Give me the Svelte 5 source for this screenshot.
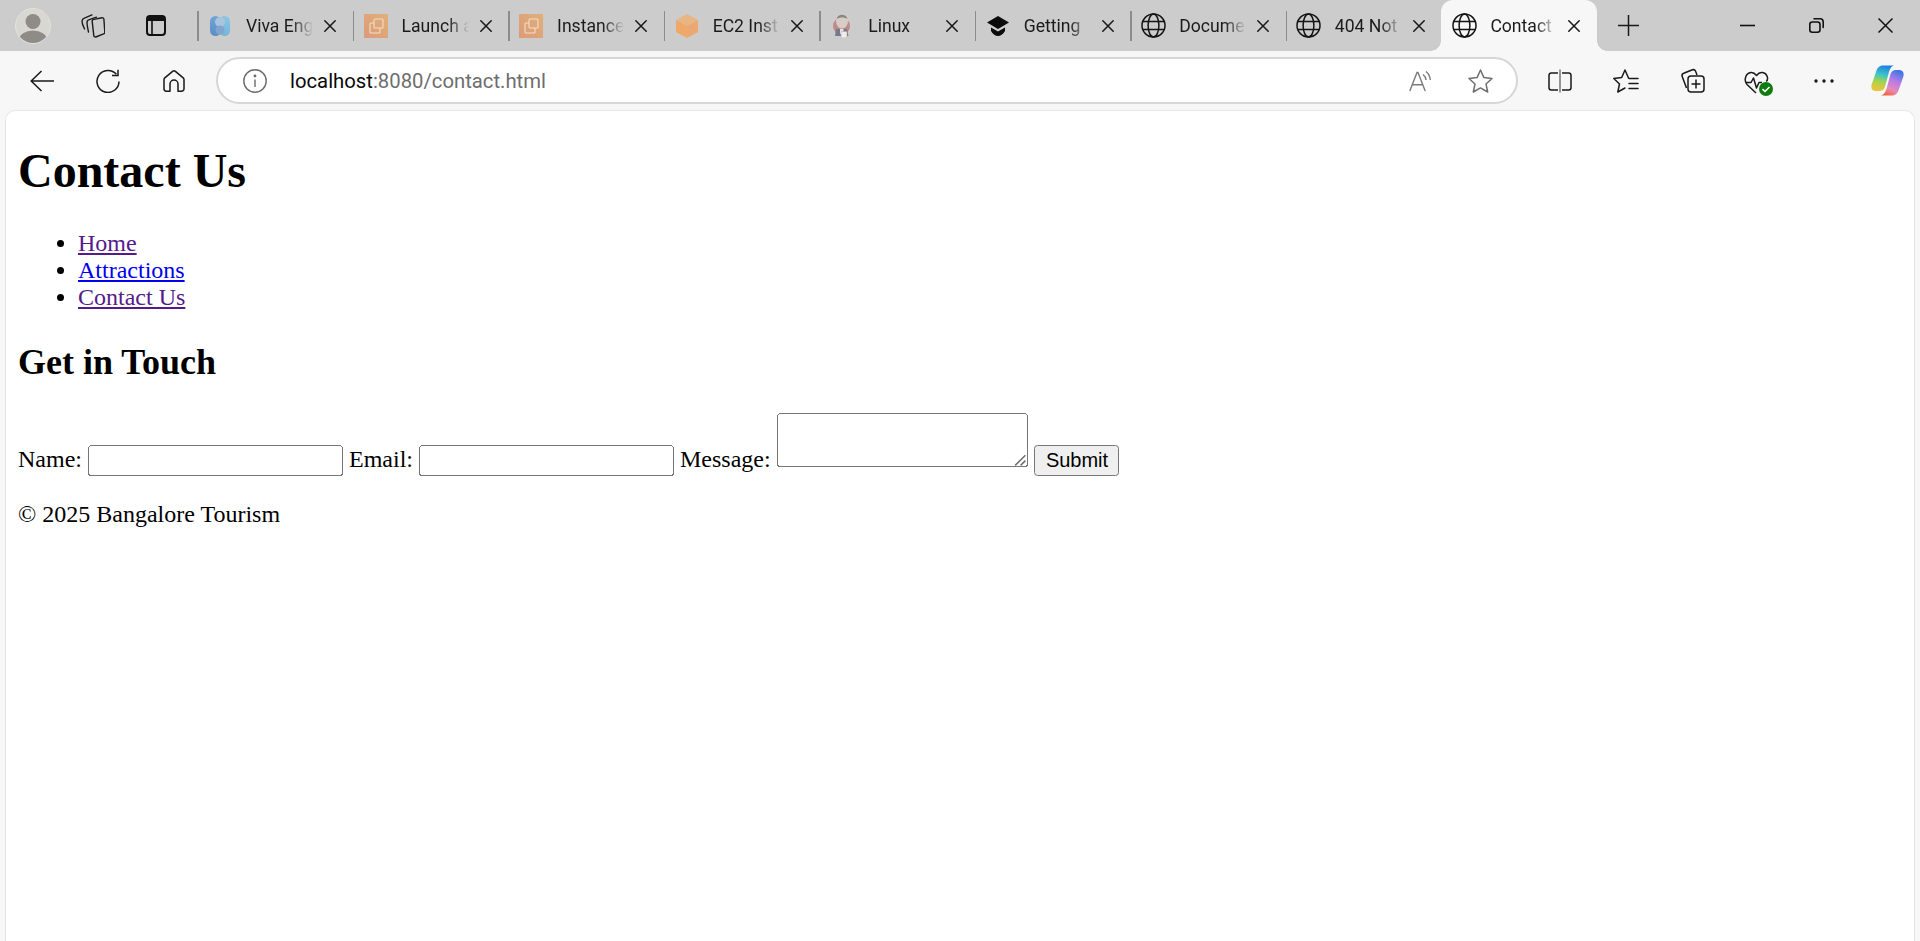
<script lang="ts">
  // Edge window chrome around the plain contact page (page itself rendered at 150%).
  const tabs = [
    { title: 'Viva Eng', icon: 'viva' },
    { title: 'Launch a', icon: 'aws' },
    { title: 'Instance', icon: 'aws' },
    { title: 'EC2 Inst', icon: 'cube' },
    { title: 'Linux', icon: 'jenkins' },
    { title: 'Getting', icon: 'cap' },
    { title: 'Docume', icon: 'globe' },
    { title: '404 Not', icon: 'globe' },
    { title: 'Contact', icon: 'globe', active: true },
  ];
</script>

{#snippet favicon(kind)}
  {#if kind === 'viva'}
    <svg class="fav" width="22" height="22" viewBox="0 0 22 22">
      <defs>
        <linearGradient id="v1" x1="0" y1="0" x2="0" y2="1"><stop offset="0" stop-color="#6fa6d6" /><stop offset="1" stop-color="#5c8cc4" /></linearGradient>
        <linearGradient id="v2" x1="0" y1="0" x2="0" y2="1"><stop offset="0" stop-color="#8cc6e2" /><stop offset="1" stop-color="#77b5da" /></linearGradient>
      </defs>
      <rect x="1" y="1" width="11" height="20" rx="5.5" fill="url(#v1)" />
      <rect x="10" y="1" width="11" height="20" rx="5.5" fill="url(#v2)" />
      <circle cx="11" cy="7" r="5" fill="#a9c4dc" />
      <circle cx="11" cy="15" r="4.5" fill="#7ea6cf" />
    </svg>
  {:else if kind === 'aws'}
    <svg class="fav" width="24" height="24" viewBox="0 0 24 24">
      <defs>
        <linearGradient id="a1" x1="0" y1="1" x2="1" y2="0"><stop offset="0" stop-color="#dc9a78" /><stop offset="1" stop-color="#e0b07a" /></linearGradient>
      </defs>
      <rect width="24" height="24" fill="url(#a1)" />
      <g fill="none" stroke="#f0dfca" stroke-width="1.1">
        <rect x="10" y="5" width="9" height="9" rx="1" />
        <path d="M10 9H7a1 1 0 0 0-1 1v8a1 1 0 0 0 1 1h8a1 1 0 0 0 1-1v-4" />
      </g>
    </svg>
  {:else if kind === 'cube'}
    <svg class="fav" width="22" height="24" viewBox="0 0 22 24">
      <path d="M11 0 22 6 11 12 0 6Z" fill="#e9b582" />
      <path d="M0 6 11 12V24L0 18Z" fill="#efa868" />
      <path d="M22 6 11 12V24L22 18Z" fill="#eba873" />
    </svg>
  {:else if kind === 'jenkins'}
    <svg class="fav" width="20" height="25" viewBox="0 0 20 25">
      <ellipse cx="9.5" cy="13" rx="8.500" ry="8.500" fill="#c08a88" />
      <ellipse cx="10" cy="8" rx="6" ry="7.500" fill="#d8cdc6" />
      <path d="M4.500 6c1-5 9.500-6 11 0-3-2-7.500-2-11 0Z" fill="#8a8583" />
      <path d="M4 16h11l1.500 7H3Z" fill="#737c8c" />
      <path d="M8 16h3.500v5H8Z" fill="#e6e3e0" />
      <rect x="9" y="18.500" width="6" height="6.500" rx="1" fill="#efedeb" stroke="#adaaa7" stroke-width=".6" />
    </svg>
  {:else if kind === 'cap'}
    <svg class="fav" width="22" height="20" viewBox="0 0 22 20">
      <path d="M11 0 22 6.5 11 13 0 6.5Z" fill="#0b0b0b" />
      <path d="M4 11.5 11 15.5 18 11.5V15C16 18.5 13.5 20 11 20S6 18.5 4 15Z" fill="#0b0b0b" />
    </svg>
  {:else}
    <svg class="fav" width="25" height="25" viewBox="0 0 25 25" fill="none" stroke="#141414" stroke-width="1.5">
      <circle cx="12.5" cy="12.5" r="11.5" />
      <ellipse cx="12.5" cy="12.5" rx="5.4" ry="11.5" />
      <path d="M1.6 8.6H23.4M1.6 16.4H23.4" />
    </svg>
  {/if}
{/snippet}

<div class="window">
  <header class="strip">
    <svg class="avatar" width="36" height="36" viewBox="0 0 36 36">
      <defs><clipPath id="ava"><circle cx="18" cy="18" r="17" /></clipPath></defs>
      <circle cx="18" cy="18" r="17.5" fill="#d8d7d2" stroke="#e2e1dc" />
      <g clip-path="url(#ava)" fill="#8f8b87">
        <circle cx="18" cy="13.5" r="7.5" />
        <ellipse cx="18" cy="32" rx="14" ry="9.5" />
      </g>
    </svg>
    <svg class="ico collections" width="24" height="24" viewBox="0 0 24 24" fill="none" stroke="#1c1c1c" stroke-width="1.4" stroke-linejoin="round" stroke-linecap="round">
      <path d="M13 5.4 21 3.8a1.6 1.6 0 0 1 1.9 1.3L23.8 18a1.6 1.6 0 0 1-1.2 1.9L14.8 23a1.6 1.6 0 0 1-2-1.4L11.2 7.4a1.7 1.7 0 0 1 1.8-2Z" />
      <path d="M7.5 18C6.6 14 6 11 6 8.6a3 3 0 0 1 2.3-3L15.5 3.2" />
      <path d="M3.6 15C2 12 1 9.5 1 7.2a3.4 3.4 0 0 1 2.4-3.1L11 .9" />
    </svg>
    <svg class="ico vert" width="20" height="21" viewBox="0 0 20 21">
      <rect x="1" y="1" width="18" height="19" rx="3" fill="none" stroke="#111" stroke-width="2" />
      <path d="M1 6V4a3 3 0 0 1 3-3h12a3 3 0 0 1 3 3v2Z" fill="#111" />
      <path d="M6 6V20" stroke="#111" stroke-width="1.6" />
    </svg>

    <div class="tabs">
      {#each tabs as tab}
        <div class="tab" class:active={tab.active}>
          <span class="fav-box">{@render favicon(tab.icon)}</span>
          <span class="title">{tab.title}</span>
          <svg class="close" width="12" height="12" viewBox="0 0 12 12" stroke="#161616" stroke-width="1.5" stroke-linecap="round">
            <path d="M.8.8 11.2 11.2M11.2.8.8 11.2" />
          </svg>
        </div>
      {/each}
    </div>

    <svg class="ico plus" width="21" height="21" viewBox="0 0 21 21" stroke="#1a1a1a" stroke-width="1.5"><path d="M10.5 0V21M0 10.5H21" /></svg>

    <div class="winctl">
      <span><svg width="15" height="15" viewBox="0 0 15 15" stroke="#111" stroke-width="1.6"><path d="M0 7.5H15" /></svg></span>
      <span><svg width="15" height="15" viewBox="0 0 15 15" fill="none" stroke="#111" stroke-width="1.6"><rect x=".8" y="4" width="10.2" height="10.2" rx="2.5" /><path d="M4.5 1.2A2.6 2.6 0 0 1 6.6.8H11a3.2 3.2 0 0 1 3.2 3.2v4.4a2.6 2.6 0 0 1-.4 1.6" /></svg></span>
      <span><svg width="15" height="15" viewBox="0 0 15 15" stroke="#111" stroke-width="1.5"><path d="M.5.5 14.5 14.5M14.5.5.5 14.5" /></svg></span>
    </div>
  </header>

  <nav class="toolbar">
    <span class="tb"><svg width="24" height="22" viewBox="0 0 24 22" fill="none" stroke="#1a1a1a" stroke-width="1.5"><path d="M24 11H1.5M11.5 1 1.2 11l10.3 10" /></svg></span>
    <span class="tb"><svg width="24" height="24" viewBox="0 0 24 24" fill="none" stroke="#1a1a1a" stroke-width="1.5"><path d="M20.4 5.3A11 11 0 1 0 23 12.5" /><path d="M22 .8V6.4H16" /></svg></span>
    <span class="tb"><svg width="22" height="22" viewBox="0 0 22 22" fill="none" stroke="#1a1a1a" stroke-width="1.5" stroke-linejoin="round"><path d="M9.6 1.4a2.2 2.2 0 0 1 2.8 0l7.8 6.5a2.2 2.2 0 0 1 .8 1.7v9.2a2.4 2.4 0 0 1-2.4 2.4H15V14a4 4 0 0 0-8 0v7.2H3.400A2.400 2.400 0 0 1 1 18.800V9.600a2.200 2.200 0 0 1 .8-1.700Z" /></svg></span>

    <div class="address">
      <svg class="info" width="24" height="24" viewBox="0 0 24 24" fill="none" stroke="#6b6b6b" stroke-width="1.4"><circle cx="12" cy="12" r="11.200" /><path d="M12 10.500V18" /><circle cx="12" cy="7" r=".7" fill="#6b6b6b" /></svg>
      <span class="url"><span class="host">localhost</span>:8080/contact.html</span>
      <svg class="read" width="24" height="22" viewBox="0 0 24 22" fill="none" stroke="#7a7a7a" stroke-width="1.4"><path d="M.8 21 8 2.500h1L16.200 21M3.500 14.800H13.500" /><path d="M14 4.500c1.800 1.300 2.800 3 3 5.500M17 1.500c2.500 2 4 5 4.300 8.500" /></svg>
      <svg class="star" width="25" height="24" viewBox="0 0 25 24" fill="none" stroke="#6f6f6f" stroke-width="1.5" stroke-linejoin="round"><path d="M12.500 1 15.900 8.600 24 9.500 18 15 19.700 23 12.500 18.900 5.300 23 7 15 1 9.500 9.100 8.600Z" /></svg>
    </div>

    <div class="actions">
      <span class="tb"><svg width="24" height="24" viewBox="0 0 24 24" fill="none" stroke="#1a1a1a" stroke-width="1.5"><path d="M10 4H3.200A2.200 2.200 0 0 0 1 6.200V18.800A2.200 2.200 0 0 0 3.200 21H10M14 4H20.800A2.200 2.200 0 0 1 23 6.200V18.800A2.200 2.200 0 0 1 20.800 21H14" /><path d="M12 .5V23.500" stroke="#555" stroke-width="1.200" /></svg></span>
      <span class="tb"><svg width="26" height="24" viewBox="0 0 26 24" fill="none" stroke="#1a1a1a" stroke-width="1.5" stroke-linejoin="round" stroke-linecap="round"><path d="M15.500 9 12 1 8.700 8.500.8 9.500 6.500 15 4.800 23 12 19" /><path d="M16 9.500H25M16 14.500H25M16 19.500H25" /></svg></span>
      <span class="tb"><svg width="25" height="25" viewBox="0 0 25 25" fill="none" stroke="#1a1a1a" stroke-width="1.5" stroke-linejoin="round"><path d="M6.500 20 2.200 8.500a2.500 2.500 0 0 1 1.500-3.200L12.500 1.800a2.500 2.500 0 0 1 3 1.200L17 7" /><rect x="8" y="8" width="16" height="16" rx="3" /><path d="M16 11.500V20.500M11.500 16H20.500" /></svg></span>
      <span class="tb"><svg width="29" height="30" viewBox="0 0 29 30" fill="none"><g transform="translate(0 4)" stroke="#1a1a1a" stroke-width="1.500" stroke-linejoin="round"><path d="M12 23 3 14.500C-.5 10.500 1.500 3 7 2.500c2.500-.2 4 1 5.500 3C14 3.500 16 2 18.500 2.500c4.500.8 6.500 6 3.800 9" /><path d="M1.500 12.500H7L9.500 8 12.500 18 15 12.500H18" /></g><circle cx="22" cy="23" r="7" fill="#107c10" /><path d="M18.500 23.200 21 25.500 25.500 21" stroke="#fff" stroke-width="1.600" /></svg></span>
      <span class="tb"><svg width="20" height="4" viewBox="0 0 20 4" fill="#1a1a1a"><circle cx="2" cy="2" r="1.700" /><circle cx="10" cy="2" r="1.700" /><circle cx="18" cy="2" r="1.700" /></svg></span>
    </div>
    <svg class="copilot" width="33" height="31" viewBox="0 0 33 31">
      <defs>
        <linearGradient id="c1" x1=".55" y1="0" x2=".35" y2="1"><stop offset="0" stop-color="#1f7fe8" /><stop offset=".35" stop-color="#3cc3c8" /><stop offset=".65" stop-color="#a6d44c" /><stop offset="1" stop-color="#f4c13c" /></linearGradient>
        <linearGradient id="c2" x1=".7" y1="0" x2=".3" y2="1"><stop offset="0" stop-color="#3a78e6" /><stop offset=".4" stop-color="#b67be6" /><stop offset=".75" stop-color="#e889b8" /><stop offset="1" stop-color="#f2683c" /></linearGradient>
      </defs>
      <path d="M12 .5H23C19.500 1.500 18.500 5 17.500 9L14.500 20C13.500 24.500 11.500 26 8 26H5C1 26-.5 23 .8 19L5 7C6.200 2.800 8.500.5 12 .5Z" fill="url(#c1)" />
      <path d="M21 30.500H10C13.500 29.500 15 26 16 22L19 11C20 6.500 22 5 25.500 5H28C32 5 33.500 8 32.200 12L28 24C26.800 28.200 24.500 30.500 21 30.500Z" fill="url(#c2)" />
    </svg>
  </nav>

  <main class="card">
    <div class="page">
      <h1>Contact Us</h1>
      <ul>
        <li><a class="seen" href="#home">Home</a></li>
        <li><a href="#attractions">Attractions</a></li>
        <li><a class="seen" href="#contact">Contact Us</a></li>
      </ul>
      <h2>Get in Touch</h2>
      <form>
        <label for="name">Name:</label>
        <input id="name" type="text" />
        <label for="email">Email:</label>
        <input id="email" type="email" />
        <label for="message">Message:</label>
        <span class="area">
          <textarea id="message"></textarea>
          <svg class="grip" width="8" height="8" viewBox="0 0 8 8" fill="none" stroke="#6f6f6f" stroke-width="1"><path d="M.8 7.600 7.600.8M4.400 7.600 7.600 4.400" /></svg>
        </span>
        <button type="button">Submit</button>
      </form>
      <footer><p>© 2025 Bangalore Tourism</p></footer>
    </div>
  </main>
</div>

<style>
  :global(body) { margin: 0; overflow: hidden; background: #f7f7f7; }
  .window { height: 941px; display: flex; flex-direction: column; font-family: Roboto, "Noto Sans", sans-serif; }

  .strip { height: 51px; flex-shrink: 0; display: flex; align-items: center; background: #ccc; padding-left: 15px; }
  .avatar { flex-shrink: 0; }
  .ico { flex-shrink: 0; }
  .collections { margin-left: 30px; }
  .vert { margin-left: 41px; }

  .tabs { display: flex; margin-left: 31px; height: 100%; }
  .tab { width: 155.55px; box-sizing: border-box; position: relative; display: flex; align-items: center; }
  .tab::before { content: ''; position: absolute; left: 0; top: 11px; bottom: 10px; width: 1.5px; background: #8c8c8c; }
  .fav-box { width: 22px; margin-left: 12px; display: flex; justify-content: center; flex-shrink: 0; }
  .fav { flex-shrink: 0; }
  .title { width: 67px; margin-left: 15px; flex-shrink: 0; font-size: 17.6px; color: #1b1b1b; white-space: nowrap; overflow: hidden;
           -webkit-mask-image: linear-gradient(to right, #000 68%, transparent 100%); mask-image: linear-gradient(to right, #000 68%, transparent 100%); }
  .close { margin-left: 11px; flex-shrink: 0; }

  .tab.active { background: #f7f7f7; border-radius: 12px 12px 0 0; }
  .tab.active::before,
  .tab.active::after { content: ''; position: absolute; top: auto; bottom: 0; width: 10px; height: 10px; background: radial-gradient(circle at 0 0, transparent 9.5px, #f7f7f7 10px); }
  .tab.active::before { left: -10px; }
  .tab.active::after { right: -10px; background: radial-gradient(circle at 100% 0, transparent 9.5px, #f7f7f7 10px); }

  .plus { margin-left: 21px; }
  .winctl { margin-left: auto; display: flex; }
  .winctl span { width: 69px; display: flex; justify-content: center; }

  .toolbar { height: 59px; flex-shrink: 0; display: flex; align-items: center; background: #f7f7f7; padding-left: 9px; }
  .tb { width: 66px; display: flex; justify-content: center; align-items: center; flex-shrink: 0; }
  .address { flex: 1; height: 47px; margin-left: 9px; box-sizing: border-box; display: flex; align-items: center; background: #fff; border: 2px solid #d6d6d6; border-radius: 24px; padding-left: 25px; padding-right: 23px; }
  .info { flex-shrink: 0; }
  .url { margin-left: 23px; font-size: 20.3px; color: #6e6e6e; white-space: nowrap; }
  .host { color: #0a0a0a; }
  .read { margin-left: auto; }
  .star { margin-left: 35px; }
  .actions { display: flex; margin-left: 9px; }
  .copilot { margin-left: 14px; margin-right: 16px; flex-shrink: 0; }

  .card { flex: 1; margin: 0 5px; background: #fff; border: 1px solid #e6e6e6; border-bottom: 0; border-radius: 10px 10px 0 0; min-height: 0; }
  .page { zoom: 1.5; display: flow-root; padding: 0 8px; font-family: "Liberation Serif", "Times New Roman", serif; font-size: 16px; color: #000; }
  a { color: #0000ee; }
  a.seen { color: #551a8b; }
  form { padding-bottom: .67px; }
  input { width: 170px; height: 21px; box-sizing: border-box; }
  .area { position: relative; display: inline-block; font-size: 0; }
  textarea { width: 167.5px; height: 36px; box-sizing: border-box; resize: none; font-size: 13px; }
  .grip { position: absolute; right: 1px; bottom: 1px; }
  button { height: 21px; width: 57px; box-sizing: border-box; padding: 1px 6px; font-family: "Liberation Sans", Arial, sans-serif; font-size: 13.333px; }
</style>
